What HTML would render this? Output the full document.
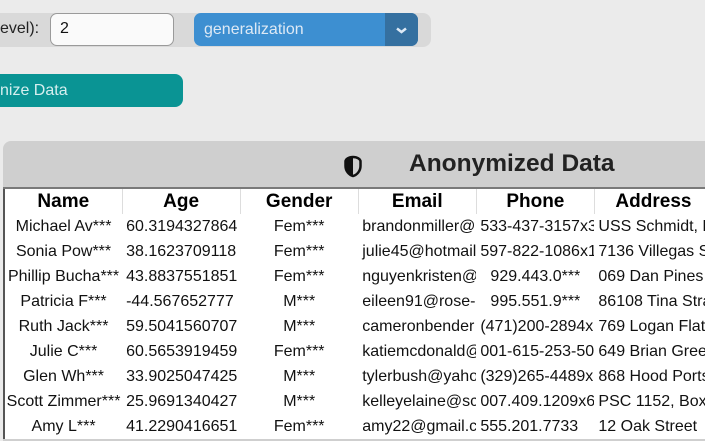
<!DOCTYPE html>
<html><head><style>
body{margin:0;width:705px;height:416px;overflow:hidden;background:#ebebeb;font-family:"Liberation Sans",Arial,sans-serif;position:relative}
.bar{position:absolute;left:0;top:13px;width:431px;height:34px;background:#d9d9d9;border-radius:0 8px 8px 0}
.lbl{position:absolute;left:0;top:20px;font-size:16px;color:#222}
.inp{position:absolute;left:50px;top:13px;background:#fafafa;border:1.5px solid #9a9a9a;border-radius:7px;box-sizing:border-box;width:124px;height:33px;font-size:16px;padding:6px 9px;color:#111}
.sel{position:absolute;left:194px;top:13px;width:224px;height:33px;background:#3d8fd1;border-radius:7px;overflow:hidden;color:#dde9f5;font-size:16px}
.sel span{position:absolute;left:10px;top:8px}
.sel .ch{position:absolute;right:0;top:0;width:33px;height:33px;background:#3570a0}
.btn{position:absolute;left:-10px;top:74px;width:193px;height:33px;background:#0a9494;border-radius:8px;color:#d6efef;font-size:16px}
.btn span{position:absolute;left:10px;top:8px}
.panel{position:absolute;left:3px;top:141px;width:720px;height:300px;background:#cfcfcf;border-radius:8px 0 0 0}
.title{position:absolute;left:409px;top:150px;font-size:24.5px;font-weight:bold;color:#222}
table{position:absolute;left:3px;top:187px;border-collapse:collapse;background:#fff;border-top:2px solid #7a7a7a;border-left:2px solid #555;table-layout:fixed;width:710px}
col{width:118px}
td,th{overflow:hidden;white-space:nowrap;padding:0 0 0 4px;height:25px;font-size:16px;color:#111;box-sizing:border-box}
th{font-size:19px;font-weight:bold;text-align:center;border-right:1px solid #ddd;color:#000;padding:0;height:26px}
td.c{text-align:center;padding:0}
</style></head><body>
<div class="bar"></div>
<div class="lbl">evel):</div>
<div class="inp">2</div>
<div class="sel"><span>generalization</span><div class="ch"><svg width="33" height="33"><path d="M12 15.5l4.5 3.5 4.5-3.5" stroke="#dde9f5" stroke-width="2.5" fill="none"/></svg></div></div>
<div class="btn"><span>nize Data</span></div>
<div class="panel"></div>
<svg style="position:absolute;left:343px;top:155px" width="20" height="23" viewBox="0 0 20 23"><path d="M10 2C6 2 2.5 4 2.5 6.5V11c0 5 3.5 9 7.5 10 4-1 7.5-5 7.5-10V6.5C17.5 4 14 2 10 2z" fill="none" stroke="#111" stroke-width="2.5"/><path d="M10 2C6 2 2.5 4 2.5 6.5V11c0 5 3.5 9 7.5 10z" fill="#111"/></svg>
<div class="title">Anonymized Data</div>
<table>
<colgroup><col><col><col><col><col><col></colgroup>
<tr><th>Name</th><th>Age</th><th>Gender</th><th>Email</th><th>Phone</th><th>Address</th></tr>
<tr><td class="c">Michael Av***</td><td>60.3194327864</td><td class="c">Fem***</td><td>brandonmiller@</td><td>533-437-3157x3</td><td>USS Schmidt, FPO</td></tr>
<tr><td class="c">Sonia Pow***</td><td>38.1623709118</td><td class="c">Fem***</td><td>julie45@hotmail</td><td>597-822-1086x1</td><td>7136 Villegas St</td></tr>
<tr><td class="c">Phillip Bucha***</td><td>43.8837551851</td><td class="c">Fem***</td><td>nguyenkristen@</td><td class="c">929.443.0***</td><td>069 Dan Pines</td></tr>
<tr><td class="c">Patricia F***</td><td>-44.567652777</td><td class="c">M***</td><td>eileen91@rose-</td><td class="c">995.551.9***</td><td>86108 Tina Strav</td></tr>
<tr><td class="c">Ruth Jack***</td><td>59.5041560707</td><td class="c">M***</td><td>cameronbender</td><td>(471)200-2894x</td><td>769 Logan Flats</td></tr>
<tr><td class="c">Julie C***</td><td>60.5653919459</td><td class="c">Fem***</td><td>katiemcdonald@</td><td>001-615-253-50</td><td>649 Brian Green</td></tr>
<tr><td class="c">Glen Wh***</td><td>33.9025047425</td><td class="c">M***</td><td>tylerbush@yaho</td><td>(329)265-4489x</td><td>868 Hood Ports</td></tr>
<tr><td class="c">Scott Zimmer***</td><td>25.9691340427</td><td class="c">M***</td><td>kelleyelaine@sc</td><td>007.409.1209x6</td><td>PSC 1152, Box</td></tr>
<tr><td class="c">Amy L***</td><td>41.2290416651</td><td class="c">Fem***</td><td>amy22@gmail.co</td><td>555.201.7733</td><td>12 Oak Street</td></tr>
</table>
</body></html>
